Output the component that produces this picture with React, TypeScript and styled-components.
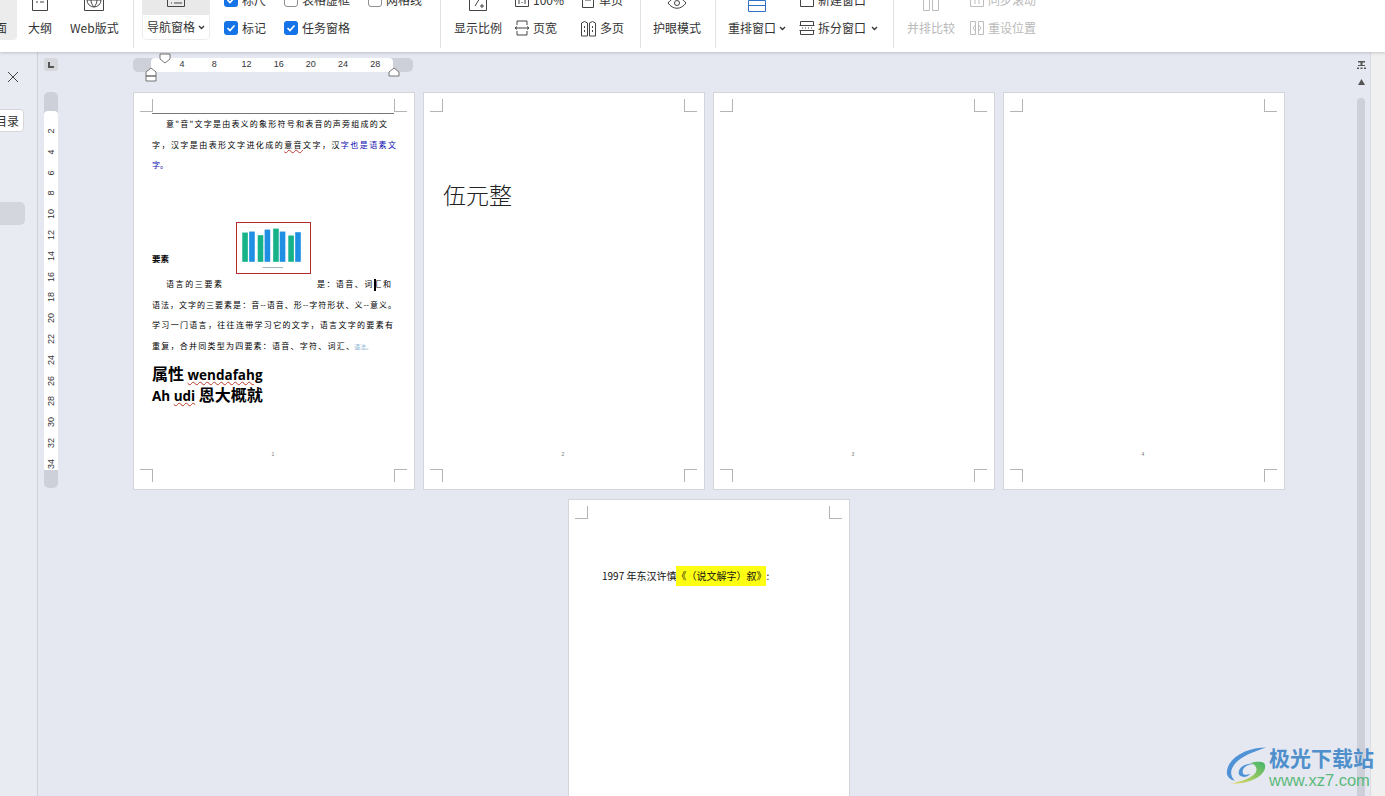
import React from 'react'
import styled, { createGlobalStyle } from 'styled-components'

const CJK = '"Noto Sans CJK SC", "Noto Sans", sans-serif'

const GlobalStyle = createGlobalStyle`
  html, body { margin: 0; padding: 0; height: 100%; overflow: hidden; }
  body { font-family: ${CJK}; background: #e5e8f1; }
  #root { height: 100%; }
`

const Shell = styled.div`
  position: relative;
  display: flex;
  flex-direction: column;
  width: 1385px;
  height: 796px;
  overflow: hidden;
`

/* ---------- ribbon ---------- */
const Toolbar = styled.div`
  position: relative;
  z-index: 2;
  flex: 0 0 52px;
  display: flex;
  align-items: flex-start;
  background: #fff;
  overflow: hidden;
  box-shadow: 0 1px 3px rgba(0, 0, 0, 0.18);
`

const Group = styled.div<{ $w: number; $pad?: number; $gap?: number; $plain?: boolean }>`
  flex: 0 0 ${p => p.$w}px;
  box-sizing: border-box;
  height: 48px;
  padding: 0 0 8px ${p => p.$pad ?? 0}px;
  display: flex;
  align-items: flex-end;
  gap: ${p => p.$gap ?? 0}px;
  border-right: ${p => (p.$plain ? 'none' : '1px solid #e2e2e2')};
`

const BigButton = styled.div<{ $active?: boolean; $off?: boolean }>`
  display: flex;
  flex-direction: column;
  align-items: center;
  padding: 0 ${p => (p.$active ? 10 : 6)}px;
  margin-left: ${p => (p.$active ? '-27px' : '0')};
  margin-right: ${p => (p.$active ? '-1px' : '0')};
  height: 60px;
  justify-content: flex-end;
  border-radius: 4px;
  background: ${p => (p.$active ? '#ececec' : 'transparent')};
  color: ${p => (p.$off ? '#b9b9b9' : '#333')};
`

const BigIcon = styled.svg`
  width: 22px;
  height: 22px;
  margin-bottom: 4px;
  fill: none;
  stroke: #444;
  stroke-width: 1;
`

const Label = styled.span<{ $off?: boolean }>`
  display: inline-flex;
  align-items: center;
  height: 24px;
  font-size: 12px;
  line-height: 24px;
  white-space: nowrap;
  color: ${p => (p.$off ? '#b9b9b9' : '#333')};
`

const Caret = styled.svg<{ $gap?: number }>`
  width: 7px;
  height: 5px;
  margin-left: ${p => p.$gap ?? 3}px;
  fill: none;
  stroke: #333;
  stroke-width: 1.3;
`

const Stack = styled.div<{ $w: number; $lead?: number }>`
  flex: 0 0 ${p => p.$w}px;
  margin-left: ${p => p.$lead ?? 0}px;
  display: flex;
  flex-direction: column;
  gap: 4px;
`

const Row = styled.div`
  display: flex;
  align-items: center;
  height: 24px;
`

const RowIcon = styled.svg<{ $w?: number; $off?: boolean }>`
  flex: none;
  width: ${p => p.$w ?? 16}px;
  height: 18px;
  margin-right: 3px;
  fill: none;
  stroke: ${p => (p.$off ? '#bdbdbd' : '#444')};
  stroke-width: 1;
`

const Box = styled.span<{ $on?: boolean }>`
  flex: 0 0 14px;
  box-sizing: border-box;
  width: 14px;
  height: 14px;
  margin-right: 4px;
  display: flex;
  align-items: center;
  justify-content: center;
  border-radius: 3px;
  background: ${p => (p.$on ? '#1473e6' : '#fff')};
  border: ${p => (p.$on ? 'none' : '1px solid #8f8f8f')};
`

const NavPane = styled.div`
  flex: 0 0 68px;
  box-sizing: border-box;
  margin-right: 14px;
  display: flex;
  flex-direction: column;
  align-items: center;
  background: #fff;
  border: 1px solid #ececec;
  border-top: none;
  border-radius: 0 0 5px 5px;
`

const NavFace = styled.div`
  align-self: stretch;
  height: 40px;
  display: flex;
  align-items: flex-end;
  justify-content: center;
  background: #e9e9e9;
`

const NavIcon = styled(BigIcon)`
  margin-bottom: 7px;
`

const BlueIcon = styled(BigIcon)`
  stroke: #2f6fc4;
`

const OffIcon = styled(BigIcon)`
  stroke: #bdbdbd;
`

/* ---------- side strip ---------- */
const Body = styled.div`
  flex: 1;
  display: flex;
  min-height: 0;
`

const SidePanel = styled.div`
  flex: 0 0 38px;
  box-sizing: border-box;
  min-width: 0;
  overflow: hidden;
  padding-top: 16px;
  display: flex;
  flex-direction: column;
  align-items: flex-end;
  background: #e8ecf2;
  border-right: 1px solid #cfd2d8;
`

const CloseIcon = styled.svg`
  flex: none;
  width: 14px;
  height: 18px;
  margin-right: 17px;
  fill: none;
  stroke: #444;
  stroke-width: 1;
`

const TocButton = styled.div`
  box-sizing: border-box;
  width: 40px;
  height: 23px;
  margin: 23px 13px 0 0;
  flex: none;
  display: flex;
  align-items: center;
  justify-content: flex-end;
  padding-right: 4px;
  font-size: 12px;
  color: #333;
  background: #fff;
  border: 1px solid #d4d6da;
  border-radius: 4px;
`

const SideItem = styled.div`
  flex: none;
  width: 40px;
  height: 23px;
  margin: 70px 12px 0 0;
  background: #d3d6dd;
  border-radius: 5px;
`

/* ---------- workspace ---------- */
const Workspace = styled.div`
  flex: 1;
  box-sizing: border-box;
  padding: 6px 0 0 6px;
  display: grid;
  grid-template-columns: 14px 1150px;
  grid-template-rows: 14px auto;
  column-gap: 76px;
  row-gap: 21px;
  align-content: start;
  min-width: 0;
`

const CornerTab = styled.div`
  width: 14px;
  height: 13px;
  display: flex;
  align-items: center;
  justify-content: center;
  background: #d6d8dc;
  border-radius: 3px;
`

const HRuler = styled.div`
  position: relative;
  box-sizing: border-box;
  width: 280px;
  height: 14px;
  margin-left: -1px;
  padding: 0 20px 0 18px;
  background: #cdd0d8;
  border-radius: 5px;
`

const HScale = styled.div`
  height: 14px;
  padding-left: 15px;
  display: flex;
  background: #fff;
  border-radius: 4px;
`

const Tick = styled.span`
  flex: 0 0 32.2px;
  text-align: center;
  font: 9px/13px 'Liberation Sans', sans-serif;
  color: #333;
`

const Marker = styled.svg<{ $x: number; $y: number }>`
  position: absolute;
  left: ${p => p.$x}px;
  top: ${p => p.$y}px;
  width: 12px;
  height: 16px;
  fill: #fff;
  stroke: #555;
  stroke-width: 0.8;
`

const VRuler = styled.div`
  box-sizing: border-box;
  width: 14px;
  height: 396px;
  margin-top: -1px;
  padding: 19px 0 18px;
  background: #cdd0d8;
  border-radius: 5px;
`

const VScale = styled.div`
  height: 100%;
  overflow: hidden;
  padding-top: 9.6px;
  box-sizing: border-box;
  background: #fff;
  border-radius: 4px 4px 0 0;
`

const VTick = styled.div`
  height: 20.8px;
  display: flex;
  align-items: center;
  justify-content: center;
  font: 9px/14px 'Liberation Sans', sans-serif;
  color: #333;
  span {
    transform: rotate(-90deg);
  }
`

const Pages = styled.div`
  display: flex;
  flex-wrap: wrap;
  justify-content: center;
  gap: 11px 10px;
`

const Sheet = styled.div`
  position: relative;
  flex: 0 0 280px;
  box-sizing: border-box;
  height: 396px;
  padding: 21px 18px 0 18px;
  display: flex;
  flex-direction: column;
  background: #fff;
  box-shadow: 0 0 0 1px #d3d5da;
  color: #000;
`

const Crop = styled.i<{ $v: 'top' | 'bottom'; $h: 'left' | 'right' }>`
  position: absolute;
  ${p => p.$v}: ${p => (p.$v === 'top' ? 6 : 7)}px;
  ${p => p.$h}: ${p => (p.$h === 'left' ? 6 : 7)}px;
  width: 12px;
  height: 12px;
  border-${p => (p.$v === 'top' ? 'bottom' : 'top')}: 1px solid #b4b4b4;
  border-${p => (p.$h === 'left' ? 'right' : 'left')}: 1px solid #b4b4b4;
`

const HeaderRule = styled.div`
  position: absolute;
  top: 20px;
  left: 18px;
  right: 20px;
  border-top: 1px solid #777;
`

const Line = styled.div<{ $indent?: number; $inset?: number; $loose?: boolean }>`
  height: 20.7px;
  padding: 0 ${p => p.$inset ?? 0}px 0 ${p => p.$indent ?? 0}px;
  font-size: 8px;
  line-height: 20.7px;
  white-space: ${p => (p.$loose ? 'nowrap' : 'normal')};
  text-align: justify;
  text-align-last: ${p => (p.$loose ? 'left' : 'justify')};
  overflow: hidden;
`

const Blue = styled.span`
  color: #0b0bb0;
`

const Pale = styled.span`
  color: #8fb4d6;
  font-size: 6px;
`

const Wavy = styled.span`
  text-decoration: underline wavy #c0392b 1px;
`

const Piece = styled.span<{ $w: number; $gap?: number }>`
  display: inline-block;
  width: ${p => p.$w}px;
  margin-right: ${p => p.$gap ?? 0}px;
  text-align-last: justify;
`

const InsertCaret = styled.i`
  position: absolute;
  left: 240px;
  top: 186px;
  width: 1.5px;
  height: 12px;
  background: #000;
`

const FigureRow = styled.div`
  height: 52px;
  margin-top: 46px;
  display: flex;
  align-items: flex-end;
`

const FigureLabel = styled.span`
  flex: 0 0 84px;
  padding-bottom: 9px;
  font-size: 8.5px;
  line-height: 14px;
  font-weight: 700;
`

const Figure = styled.svg`
  flex: none;
  width: 75px;
  height: 52px;
  box-sizing: border-box;
  border: 1px solid #b22a2a;
  background: #fff;
`

const HeadingBlock = styled.div`
  margin-top: 7px;
`

const Heading = styled.div`
  font-family: 'Open Sans', ${CJK};
  font-size: 13.5px;
  font-weight: 700;
  line-height: 20px;
  white-space: nowrap;
`

const Big = styled.span`
  font-size: 16px;
`

const PageNo = styled.div`
  margin-top: auto;
  padding: 0 2px 32px 0;
  text-align: center;
  font: 5px/6px 'Liberation Sans', sans-serif;
  color: #777;
`

const Amount = styled.div`
  margin: 64px 0 0 1px;
  font-size: 23px;
  line-height: 32px;
  font-weight: 300;
  color: #222;
`

const Citation = styled.div`
  margin: 45px 0 0 15px;
  font-size: 10px;
  line-height: 20px;
  white-space: nowrap;
  color: #111;
  text-spacing-trim: space-all;
`

const Mark = styled.span`
  display: inline-block;
  background: #ffff14;
`

/* ---------- right edge ---------- */
const ScrollRail = styled.div`
  flex: 0 0 18px;
  padding-top: 9px;
  display: flex;
  flex-direction: column;
  align-items: center;
`

const RailIcon = styled.svg`
  flex: none;
  width: 9px;
  height: 8px;
  margin-bottom: 9px;
  fill: #555;
`

const Thumb = styled.div`
  flex: 1;
  width: 8px;
  margin-top: 3px;
  background: #cdd0d8;
  border-radius: 4px 4px 0 0;
`

const EdgePanel = styled.div`
  flex: 0 0 14px;
  background: #f0f0f0;
  border-left: 1px solid #dcdde0;
`

/* ---------- watermark ---------- */
const Stamp = styled.div`
  position: absolute;
  left: 1226px;
  top: 746px;
  display: flex;
`

const StampLogo = styled.svg`
  flex: none;
  width: 43px;
  height: 42px;
`

const StampText = styled.div`
  display: flex;
  flex-direction: column;
`

const StampName = styled.span`
  font-size: 21px;
  line-height: 22px;
  font-weight: 700;
  white-space: nowrap;
  color: #4f8fcb;
`

const StampUrl = styled.span`
  margin-top: 3px;
  font: 16.5px/19px 'Liberation Sans', sans-serif;
  color: #5cb97c;
`

const Chevron = ({ gap }: { gap?: number }) => (
  <Caret viewBox="0 0 7 5" $gap={gap}>
    <path d="M1 1l2.5 2.5L6 1" />
  </Caret>
)

const Check = () => (
  <svg width="10" height="10" viewBox="0 0 10 10" fill="none" stroke="#fff" strokeWidth="1.7">
    <path d="M1.5 5l2.5 2.5 4.5-5" />
  </svg>
)

const CheckItem = ({ on, children }: { on?: boolean; children: React.ReactNode }) => (
  <Row>
    <Box $on={on}>{on && <Check />}</Box>
    <Label>{children}</Label>
  </Row>
)

const Corners = () => (
  <>
    <Crop $v="top" $h="left" />
    <Crop $v="top" $h="right" />
    <Crop $v="bottom" $h="left" />
    <Crop $v="bottom" $h="right" />
  </>
)

const bars: [number, number, string][] = [
  [16, 28, '#17b388'], [37, 25, '#1f8fe3'], [63, 36, '#17b388'], [84, 19, '#1f8fe3'],
  [110, 16, '#17b388'], [130, 25, '#1f8fe3'], [156, 37, '#17b388'], [177, 27, '#1f8fe3'],
]

const Chart = () => (
  <Figure viewBox="0 0 222 150">
    {[12, 32, 52, 72, 92, 112].map(y => (
      <line key={y} x1="12" x2="205" y1={y} y2={y} stroke="#eef1f4" strokeWidth="1.5" />
    ))}
    {bars.map(([x, top, fill]) => (
      <rect key={x} x={x} y={top} width="17" height={117 - top} fill={fill} />
    ))}
    <rect x="78" y="133" width="62" height="3" fill="#9fb4c0" />
  </Figure>
)

const hTicks = [4, 8, 12, 16, 20, 24, 28]
const vTicks = Array.from({ length: 17 }, (_, i) => (i + 1) * 2)

export default function App() {
  return (
    <Shell>
      <GlobalStyle />
      <Toolbar>
        <Group $w={134} $gap={6}>
          <BigButton $active>
            <Label>页面</Label>
          </BigButton>
          <BigButton>
            <BigIcon viewBox="0 0 22 22">
              <path d="M3.5.5h15v20h-15zM7 8h8M7 12h2M11 12h4" />
            </BigIcon>
            <Label>大纲</Label>
          </BigButton>
          <BigButton>
            <BigIcon viewBox="0 0 22 22">
              <path d="M1.5.5h19v20h-19z" />
              <circle cx="11" cy="10" r="7" />
              <path d="M4 10h14M11 3c-4 4-4 10 0 14M11 3c4 4 4 10 0 14" />
            </BigIcon>
            <Label>Web版式</Label>
          </BigButton>
        </Group>
        <Group $w={307} $pad={8}>
          <NavPane>
            <NavFace>
              <NavIcon viewBox="0 0 22 22">
                <path d="M2.5.5h17v20h-17zM6 9h1M9 9h8M6 13h1M9 13h8M6 17h1M9 17h8" />
              </NavIcon>
            </NavFace>
            <Label>
              导航窗格
              <Chevron />
            </Label>
          </NavPane>
          <Stack $w={60}>
            <CheckItem on>标尺</CheckItem>
            <CheckItem on>标记</CheckItem>
          </Stack>
          <Stack $w={84}>
            <CheckItem>表格虚框</CheckItem>
            <CheckItem on>任务窗格</CheckItem>
          </Stack>
          <Stack $w={60}>
            <CheckItem>网格线</CheckItem>
            <Row />
          </Stack>
        </Group>
        <Group $w={200} $pad={7}>
          <BigButton>
            <BigIcon viewBox="0 0 22 22">
              <path d="M2.5.5h17v20h-17zM8 16l5-8M14 15h2v2h-2z" />
            </BigIcon>
            <Label>显示比例</Label>
          </BigButton>
          <Stack $w={66} $lead={6}>
            <Row>
              <RowIcon viewBox="0 0 16 18">
                <path d="M1.5 3.5h13v12h-13zM5 7v6M11 7v6M8 8v1M8 11v1" />
              </RowIcon>
              <Label>100%</Label>
            </Row>
            <Row>
              <RowIcon viewBox="0 0 16 18">
                <path d="M3 6V2h10v4M3 12v4h10v-4M1 9h14M3 7.5L1 9l2 1.5M13 7.5L15 9l-2 1.5" />
              </RowIcon>
              <Label>页宽</Label>
            </Row>
          </Stack>
          <Stack $w={48}>
            <Row>
              <RowIcon viewBox="0 0 16 18">
                <path d="M2.5 1.5h11v15h-11zM5 9h6" />
              </RowIcon>
              <Label>单页</Label>
            </Row>
            <Row>
              <RowIcon viewBox="0 0 17 18" $w={17}>
                <path d="M1.5 4q3-3 6 0v13h-6zM9.5 4q3-3 6 0v13h-6zM4.5 7v2M12.5 7v2M4.5 11v2M12.5 11v2" />
              </RowIcon>
              <Label>多页</Label>
            </Row>
          </Stack>
        </Group>
        <Group $w={75} $pad={6}>
          <BigButton>
            <BigIcon viewBox="0 0 22 22">
              <path d="M2 13c5-7 13-7 18 0-5 7-13 7-18 0z" />
              <circle cx="11" cy="13" r="2.5" />
            </BigIcon>
            <Label>护眼模式</Label>
          </BigButton>
        </Group>
        <Group $w={178} $pad={6}>
          <BigButton>
            <BlueIcon viewBox="0 0 22 22">
              <path d="M2.5 10.5h17v11h-17zM2.5 15.5h17" />
            </BlueIcon>
            <Label>
              重排窗口
              <Chevron />
            </Label>
          </BigButton>
          <Stack $w={90} $lead={7}>
            <Row>
              <RowIcon viewBox="0 0 16 18">
                <path d="M1.5 2.5h13v13h-13z" />
              </RowIcon>
              <Label>新建窗口</Label>
            </Row>
            <Row>
              <RowIcon viewBox="0 0 16 18">
                <path d="M1.5 6V2.5h13V6M1.5 12v3.5h13V12M.5 6.5h15M.5 11.5h15M3 9h1M6 9h1M9 9h1M12 9h1" />
              </RowIcon>
              <Label>
                拆分窗口
                <Chevron gap={5} />
              </Label>
            </Row>
          </Stack>
        </Group>
        <Group $w={200} $pad={7} $plain>
          <BigButton $off>
            <OffIcon viewBox="0 0 22 22">
              <path d="M3.5.5h6v20h-6zM12.5.5h6v20h-6z" />
            </OffIcon>
            <Label $off>并排比较</Label>
          </BigButton>
          <Stack $w={90} $lead={8}>
            <Row>
              <RowIcon viewBox="0 0 16 18" $off>
                <path d="M1.5 2.5h13v13h-13zM6 6v7M10 6v7" />
              </RowIcon>
              <Label $off>同步滚动</Label>
            </Row>
            <Row>
              <RowIcon viewBox="0 0 16 18" $off>
                <path d="M1.5 2.5h5v13h-5zM9.5 2.5h5v13h-5zM6.5 6L4 9l2.5 3M9.5 6L12 9l-2.5 3" />
              </RowIcon>
              <Label $off>重设位置</Label>
            </Row>
          </Stack>
        </Group>
      </Toolbar>

      <Body>
        <SidePanel>
          <CloseIcon viewBox="0 0 14 18">
            <path d="M2 4l10 10M12 4L2 14" />
          </CloseIcon>
          <TocButton>目录</TocButton>
          <SideItem />
        </SidePanel>

        <Workspace>
          <CornerTab>
            <svg width="8" height="8" viewBox="0 0 8 8" fill="#555">
              <path d="M1 1h2v4h4v2H1z" />
            </svg>
          </CornerTab>
          <HRuler>
            <HScale>
              {hTicks.map(n => (
                <Tick key={n}>{n}</Tick>
              ))}
            </HScale>
            <Marker $x={26} $y={-5} viewBox="0 0 12 16">
              <path d="M1 1h10v5l-5 4-5-4z" />
            </Marker>
            <Marker $x={12} $y={9} viewBox="0 0 12 16">
              <path d="M1 5l5-4 5 4v4H1zM1 9h10v5H1z" />
            </Marker>
            <Marker $x={255} $y={9} viewBox="0 0 12 16">
              <path d="M1 5l5-4 5 4v4H1z" />
            </Marker>
          </HRuler>
          <VRuler>
            <VScale>
              {vTicks.map(n => (
                <VTick key={n}>
                  <span>{n}</span>
                </VTick>
              ))}
            </VScale>
          </VRuler>
          <Pages>
            <Sheet>
              <Corners />
              <HeaderRule />
              <InsertCaret />
              <Line $indent={14} $inset={9}>意"音"文字是由表义的象形符号和表音的声旁组成的文</Line>
              <Line>
                字，汉字是由表形文字进化成的<Wavy>意音</Wavy>文字，汉<Blue>字也是语素文</Blue>
              </Line>
              <Line $loose>
                <Blue>字。</Blue>
              </Line>
              <FigureRow>
                <FigureLabel>要素</FigureLabel>
                <Chart />
              </FigureRow>
              <Line $indent={14} $inset={5}>
                <Piece $w={56} $gap={95}>语言的三要素</Piece>
                <Piece $w={74}>是：语音、词汇和</Piece>
              </Line>
              <Line>语法，文字的三要素是：音--语音、形--字符形状、义--意义。</Line>
              <Line $inset={3}>学习一门语言，往往连带学习它的文字，语言文字的要素有</Line>
              <Line $loose>
                <Piece $w={202}>重复，合并同类型为四要素：语音、字符、词汇、</Piece>
                <Pale>语法。</Pale>
              </Line>
              <HeadingBlock>
                <Heading>
                  <Big>属性</Big> <Wavy>wendafahg</Wavy>
                </Heading>
                <Heading>
                  Ah <Wavy>udi</Wavy> <Big>恩大概就</Big>
                </Heading>
              </HeadingBlock>
              <PageNo>1</PageNo>
            </Sheet>
            <Sheet>
              <Corners />
              <Amount>伍元整</Amount>
              <PageNo>2</PageNo>
            </Sheet>
            <Sheet>
              <Corners />
              <PageNo>3</PageNo>
            </Sheet>
            <Sheet>
              <Corners />
              <PageNo>4</PageNo>
            </Sheet>
            <Sheet>
              <Corners />
              <Citation>
                1997 年东汉许慎<Mark>《（说文解字）叙》</Mark>:
              </Citation>
            </Sheet>
          </Pages>
        </Workspace>

        <ScrollRail>
          <RailIcon viewBox="0 0 9 8">
            <path d="M1 0h7v1.5H5.5V4H8v1H1V4h2.5V1.5H1zM0 6.5h2V8H0zM3.5 6.5h2V8h-2zM7 6.5h2V8H7z" />
          </RailIcon>
          <RailIcon viewBox="0 0 9 8">
            <path d="M4.5 1L8 7H1z" />
          </RailIcon>
          <Thumb />
        </ScrollRail>
        <EdgePanel />
      </Body>

      <Stamp>
        <StampLogo viewBox="-1 0 44 42">
          <defs>
            <linearGradient id="stampGreen" x1="1" y1="0" x2="0" y2="1">
              <stop offset="0" stopColor="#3fb56b" />
              <stop offset="1" stopColor="#e6d95a" />
            </linearGradient>
          </defs>
          <path d="M40 1C22 1 2 10 0 25c-1 5 3 9 8 10-5-5-5-11 0-17C14 10 28 5 40 1z" fill="#4f93d6" />
          <path d="M12 27c0-7 10-11 18-9-6-1-14 2-14 8 0 3 4 4 8 2-4 5-12 4-12-1z" fill="#4f93d6" />
          <path d="M38 17c4 7-4 15-14 18-8 3-16 3-21 3 11-2 25-6 27-13 1-4-2-7-6-8 6-2 11-2 14 0z" fill="url(#stampGreen)" />
        </StampLogo>
        <StampText>
          <StampName>极光下载站</StampName>
          <StampUrl>www.xz7.com</StampUrl>
        </StampText>
      </Stamp>
    </Shell>
  )
}
